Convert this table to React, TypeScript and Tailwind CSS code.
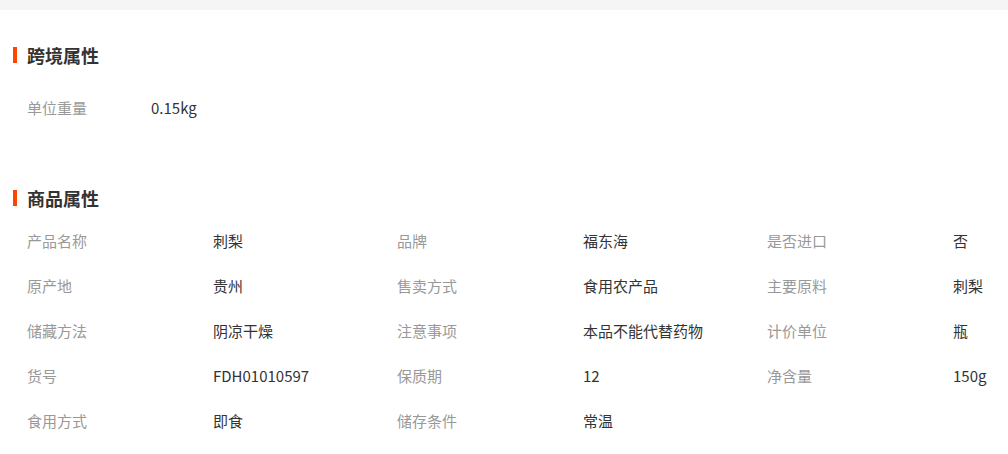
const crossBorder = [{ label: '单位重量', value: '0.15kg' }];

const goods: [string, string][] = [
  ['产品名称', '刺梨'],
  ['品牌', '福东海'],
  ['是否进口', '否'],
  ['原产地', '贵州'],
  ['售卖方式', '食用农产品'],
  ['主要原料', '刺梨'],
  ['储藏方法', '阴凉干燥'],
  ['注意事项', '本品不能代替药物'],
  ['计价单位', '瓶'],
  ['货号', 'FDH01010597'],
  ['保质期', '12'],
  ['净含量', '150g'],
  ['食用方式', '即食'],
  ['储存条件', '常温'],
];

function SectionTitle({ title, className }: { title: string; className?: string }) {
  return (
    <div className={`flex items-center h-[24px] ${className ?? ''}`}>
      <span className="ml-[13px] w-[4px] h-[16px] bg-[#ff4400]" />
      <span className="ml-[10px] text-[18px] font-bold text-[#333]">{title}</span>
    </div>
  );
}

export default function App() {
  return (
    <div
      className="w-[1008px] h-[454px] bg-white overflow-hidden"
      style={{ fontFamily: '"Noto Sans CJK SC", "Liberation Sans", sans-serif' }}
    >
      <div className="h-[10px] bg-[#f5f5f5]" />

      <SectionTitle title="跨境属性" className="mt-[33px]" />
      <div className="mt-[19px] pl-[27px]">
        {crossBorder.map((r) => (
          <div key={r.label} className="flex items-center h-[45px] text-[15px]">
            <span className="w-[124px] text-[#999]">{r.label}</span>
            <span className="text-[#333]">{r.value}</span>
          </div>
        ))}
      </div>

      <SectionTitle title="商品属性" className="mt-[55px]" />
      <div className="mt-[9px] pl-[27px] grid grid-cols-3 w-[1137px]">
        {goods.map(([label, value]) => (
          <div key={label} className="flex items-center h-[45px] text-[15px]">
            <span className="w-[186px] text-[#999]">{label}</span>
            <span className="text-[#333]">{value}</span>
          </div>
        ))}
      </div>
    </div>
  );
}
